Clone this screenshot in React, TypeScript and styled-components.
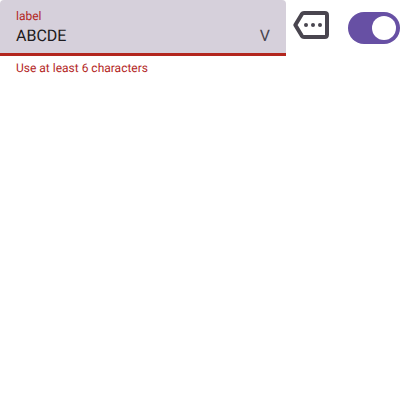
import React from "react";
import styled, { createGlobalStyle } from "styled-components";

const GlobalStyle = createGlobalStyle`
  body { margin: 0; background: #fff; font-family: Roboto, sans-serif; text-rendering: geometricPrecision; }
  * { box-sizing: border-box; }
`;
const Toolbar = styled.div`
  display: flex;
  align-items: flex-start;
  width: 400px;
`;
const Field = styled.div`
  width: 286px;
  flex: none;
`;
const FieldBox = styled.div`
  display: flex;
  height: 53px;
  padding: 8px 16px 0;
  justify-content: space-between;
  background: #d6d0db;
  border-radius: 4px 4px 0 0;
`;
const Indicator = styled.div`
  height: 3px;
  background: #b3261e;
`;
const Label = styled.div`
  font-size: 12px;
  line-height: 16px;
  color: #b3261e;
`;
const Value = styled.div`
  font-size: 16px;
  line-height: 24px;
  color: #1d1b20;
`;
const Suffix = styled(Value)`
  padding-top: 16px;
  color: #49454f;
`;
const Support = styled.div`
  padding: 4px 16px 0;
  font-size: 12px;
  line-height: 16px;
  color: #b3261e;
`;
const MoreIcon = styled.svg`
  flex: none;
  width: 48px;
  height: 48px;
  margin: 1px 0 0 1px;
`;
const Switch = styled.div`
  display: flex;
  flex: none;
  align-items: center;
  justify-content: flex-end;
  width: 52px;
  height: 32px;
  margin: 12px 0 0 13px;
  padding: 4px;
  border-radius: 16px;
  background: #6750a4;
`;
const Thumb = styled.div`
  width: 24px;
  height: 24px;
  border-radius: 50%;
  background: #fff;
`;

export default function App() {
  return (
    <>
      <GlobalStyle />
      <Toolbar>
        <Field>
          <FieldBox>
            <div>
              <Label>label</Label>
              <Value>ABCDE</Value>
            </div>
            <Suffix>V</Suffix>
          </FieldBox>
          <Indicator />
          <Support>Use at least 6 characters</Support>
        </Field>
        <MoreIcon viewBox="0 0 48 48">
          <path
            d="M17 12H37.8Q40 12 40 14.2V33.8Q40 36 37.8 36H17Q15.6 36 14.8 34.8L8.3 24L14.8 13.2Q15.6 12 17 12Z"
            fill="none"
            stroke="#49454f"
            strokeWidth="4"
            strokeLinejoin="round"
          />
          <g fill="#49454f">
            <circle cx="19" cy="24" r="2" />
            <circle cx="26" cy="24" r="2" />
            <circle cx="33" cy="24" r="2" />
          </g>
        </MoreIcon>
        <Switch>
          <Thumb />
        </Switch>
      </Toolbar>
    </>
  );
}
